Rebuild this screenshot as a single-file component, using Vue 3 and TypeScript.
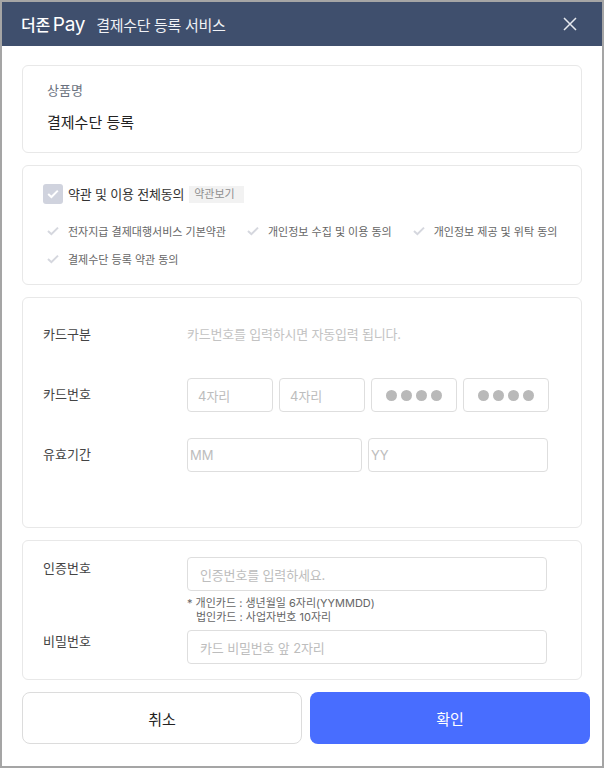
<script setup lang="ts">
const terms: string[] = [
  '전자지급 결제대행서비스 기본약관',
  '개인정보 수집 및 이용 동의',
  '개인정보 제공 및 위탁 동의',
  '결제수단 등록 약관 동의',
];
</script>

<template>
  <div class="popup">
    <header class="head">
      <span class="logo">더존<span class="pay">Pay</span></span>
      <h1 class="title">결제수단 등록 서비스</h1>
      <button class="close" aria-label="닫기">
        <svg width="14" height="14" viewBox="0 0 14 14">
          <path d="M1 1 L13 13 M13 1 L1 13" stroke="#e6e9ef" stroke-width="1.5" fill="none" />
        </svg>
      </button>
    </header>

    <div class="body">
      <section class="card product">
        <div class="product-label">상품명</div>
        <div class="product-name">결제수단 등록</div>
      </section>

      <section class="card agree">
        <div class="agree-all">
          <span class="checkbox">
            <svg width="12" height="10" viewBox="0 0 12 10">
              <path d="M1.2 5 L4.4 8 L10.8 1.6" stroke="#fff" stroke-width="2" fill="none" />
            </svg>
          </span>
          <span class="agree-text">약관 및 이용 전체동의</span>
          <span class="view-terms">약관보기</span>
        </div>
        <ul class="terms">
          <li v-for="term in terms" :key="term" class="term">
            <svg class="tick" width="12" height="10" viewBox="0 0 12 10">
              <path d="M1 5 L4.4 8.2 L11 1.6" stroke="#d5d7de" stroke-width="2" fill="none" />
            </svg>
            {{ term }}
          </li>
        </ul>
      </section>

      <section class="card card-form">
        <div class="row">
          <div class="row-label">카드구분</div>
          <div class="auto-note">카드번호를 입력하시면 자동입력 됩니다.</div>
        </div>
        <div class="row">
          <div class="row-label">카드번호</div>
          <div class="inputs">
            <div class="field num">4자리</div>
            <div class="field num">4자리</div>
            <div class="field dots"><i /><i /><i /><i /></div>
            <div class="field dots"><i /><i /><i /><i /></div>
          </div>
        </div>
        <div class="row">
          <div class="row-label">유효기간</div>
          <div class="inputs expiry">
            <div class="field date">MM</div>
            <div class="field date">YY</div>
          </div>
        </div>
      </section>

      <section class="card auth">
        <div class="auth-row">
          <div class="row-label top">인증번호</div>
          <div class="field wide">인증번호를 입력하세요.</div>
        </div>
        <div class="hint">
          <div>* 개인카드 : 생년월일 6자리(YYMMDD)</div>
          <div class="hint-second">법인카드 : 사업자번호 10자리</div>
        </div>
        <div class="auth-row">
          <div class="row-label top">비밀번호</div>
          <div class="field wide">카드 비밀번호 앞 2자리</div>
        </div>
      </section>
    </div>

    <footer class="actions">
      <button class="btn cancel">취소</button>
      <button class="btn ok">확인</button>
    </footer>
  </div>
</template>

<style>
html,
body {
  margin: 0;
  background: #fff;
}
</style>

<style scoped>
.popup {
  box-sizing: border-box;
  width: 604px;
  height: 768px;
  border: 2px solid #a5a5a5;
  background: #fff;
  font-family: Inter, "Noto Sans CJK KR", sans-serif;
  overflow: hidden;
}

.head {
  display: flex;
  align-items: center;
  height: 44px;
  padding: 0 25px 0 19px;
  background: #3f4f6d;
  color: #fff;
}

.logo {
  display: flex;
  align-items: baseline;
  font-size: 16px;
  font-weight: 500;
  letter-spacing: -0.3px;
  white-space: nowrap;
}

.pay {
  margin-left: 3px;
  font-size: 19px;
  font-weight: 400;
}

.title {
  margin: 0 0 0 11px;
  font-size: 15px;
  font-weight: 400;
  letter-spacing: -0.3px;
  color: #f0f2f6;
}

.close {
  display: flex;
  margin-left: auto;
  padding: 0;
  border: 0;
  background: none;
}

.body {
  padding: 19px 20px 0;
  display: flex;
  flex-direction: column;
  gap: 12px;
}

.card {
  box-sizing: border-box;
  width: 560px;
  border: 1px solid #e8e8e8;
  border-radius: 6px;
  background: #fff;
}

.product {
  height: 88px;
  padding: 15px 24px;
}

.product-label {
  font-size: 13px;
  line-height: 18px;
  color: #6b7280;
}

.product-name {
  margin-top: 14px;
  font-size: 15px;
  line-height: 20px;
  color: #222;
}

.agree {
  height: 120px;
  padding: 18px 20px;
}

.agree-all {
  display: flex;
  align-items: center;
  height: 20px;
}

.checkbox {
  display: flex;
  align-items: center;
  justify-content: center;
  width: 20px;
  height: 20px;
  border-radius: 3px;
  background: #d0d3de;
}

.agree-text {
  margin-left: 5px;
  padding-bottom: 2px;
  font-size: 13px;
  letter-spacing: -0.2px;
  color: #333;
}

.view-terms {
  margin-left: 5px;
  padding: 0 9px 0 5px;
  font-size: 11px;
  line-height: 17px;
  color: #8f8f8f;
  background: #f2f2f2;
}

.terms {
  display: flex;
  flex-wrap: wrap;
  margin: 13px 0 0;
  padding: 0 0 0 4px;
  list-style: none;
  column-gap: 21px;
}

.term {
  display: flex;
  align-items: center;
  height: 28px;
  font-size: 11px;
  color: #666;
  white-space: nowrap;
}

.tick {
  margin-right: 9px;
}

.card-form {
  height: 231px;
  padding: 7px 20px 0;
}

.row {
  display: flex;
  align-items: center;
  height: 60px;
}

.row-label {
  box-sizing: border-box;
  width: 144px;
  flex: none;
  padding-bottom: 4px;
  font-size: 13px;
  color: #444;
}

.auto-note {
  padding-bottom: 4px;
  font-size: 13px;
  letter-spacing: -0.2px;
  color: #c3c3c3;
}

.inputs {
  display: flex;
  gap: 6px;
}

.field {
  box-sizing: border-box;
  border: 1px solid #dedede;
  border-radius: 4px;
  background: #fff;
  color: #bdbdbd;
  display: flex;
  align-items: center;
}

.num,
.dots {
  width: 86px;
  height: 34px;
  font-size: 13px;
}

.num {
  padding-left: 10px;
}

.dots {
  justify-content: center;
  gap: 4px;
}

.dots i {
  width: 11px;
  height: 11px;
  border-radius: 50%;
  background: #b9b9b9;
}

.date {
  width: 175px;
  height: 34px;
  padding-left: 2px;
  font-size: 13px;
}

.expiry .date:last-child {
  width: 180px;
}

.auth {
  height: 140px;
  padding: 16px 20px 0;
}

.auth-row {
  display: flex;
  align-items: flex-start;
}

.row-label.top {
  margin-top: 1px;
  padding-bottom: 0;
  line-height: 20px;
}

.wide {
  width: 360px;
  height: 34px;
  padding-left: 12px;
  font-size: 13px;
  letter-spacing: -0.15px;
}

.hint {
  height: 34px;
  margin: 5px 0 0 144px;
  font-size: 11px;
  line-height: 14px;
  color: #666;
}

.hint-second {
  padding-left: 9px;
}

.actions {
  display: flex;
  gap: 8px;
  padding: 12px 0 0 20px;
}

.btn {
  width: 280px;
  height: 52px;
  padding: 0;
  border-radius: 8px;
  font-family: inherit;
  font-size: 15px;
}

.cancel {
  border: 1px solid #dcdcdc;
  background: #fff;
  color: #222;
}

.ok {
  border: 0;
  background: #486dff;
  color: #fff;
}
</style>
